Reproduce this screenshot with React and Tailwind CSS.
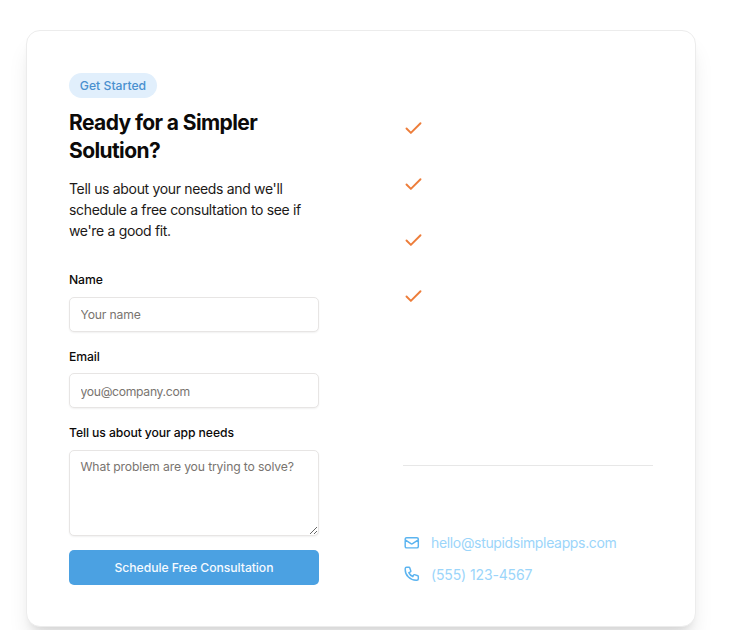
import { Check } from 'lucide-react';

const fieldClass =
  'block w-full rounded-[5px] border border-[#e7e5e4] bg-white px-[10.5px] text-[12.2px] text-[#1c1917] shadow-[0_1px_2px_rgba(0,0,0,0.06)] outline-none placeholder:text-[#79746f]';

function OutlineIcon({ d }) {
  return (
    <svg
      viewBox="0 0 24 24"
      className="size-[17.5px] shrink-0 text-[#5bb4f0]"
      fill="none"
      stroke="currentColor"
      strokeWidth="2"
      strokeLinecap="round"
      strokeLinejoin="round"
    >
      <path d={d} />
    </svg>
  );
}

const mailPath =
  'M3 8l7.89 5.26a2 2 0 002.22 0L21 8M5 19h14a2 2 0 002-2V7a2 2 0 00-2-2H5a2 2 0 00-2 2v10a2 2 0 002 2z';
const phonePath =
  'M3 5a2 2 0 012-2h3.28a1 1 0 01.948.684l1.498 4.493a1 1 0 01-.502 1.21l-2.257 1.13a11.042 11.042 0 005.516 5.516l1.13-2.257a1 1 0 011.21-.502l4.493 1.498a1 1 0 01.684.949V19a2 2 0 01-2 2h-1C9.716 21 3 14.284 3 6V5z';

function Field({ id, label, children }) {
  return (
    <div>
      <label htmlFor={id} className="block h-[25.7px] text-[12.2px] leading-[18px] font-medium tracking-[-0.1px] text-[#0c0a09]">
        {label}
      </label>
      {children}
    </div>
  );
}

export default function App() {
  return (
    <div
      className="h-[630px] overflow-hidden bg-white pt-[30px] pl-[26px] text-[#0c0a09] antialiased"
      style={{ fontFamily: 'Inter, "Liberation Sans", sans-serif' }}
    >
      <section className="grid h-[597px] w-[670px] grid-cols-2 gap-[84px] rounded-[14px] border border-[#ececec] bg-white px-[42px] pt-[42px] shadow-[0_17px_22px_-4px_rgba(0,0,0,0.1),0_7px_9px_-5px_rgba(0,0,0,0.1)]">
        <div>
          <div className="flex h-[25px] w-[88px] items-center justify-center rounded-full bg-[#e1effc] pt-px text-[12.2px] font-medium text-[#4a90cf]">
            Get Started
          </div>
          <h2 className="mt-[11px] text-[21px] leading-[28px] font-bold tracking-[-0.6px]">
            Ready for a Simpler Solution?
          </h2>
          <p className="mt-[13px] text-[14px] leading-[21px] tracking-[-0.33px] text-[#1c1917]">
            Tell us about your needs and we'll schedule a free consultation to see if we're a good fit.
          </p>
          <form className="mt-[30px]" onSubmit={(e) => e.preventDefault()}>
            <div className="flex flex-col gap-4">
              <Field id="name" label="Name">
                <input id="name" placeholder="Your name" className={`${fieldClass} h-[35px] tracking-[-0.18px]`} />
              </Field>
              <Field id="email" label="Email">
                <input id="email" placeholder="you@company.com" className={`${fieldClass} h-[35px] pt-px tracking-[-0.32px]`} />
              </Field>
              <Field id="needs" label="Tell us about your app needs">
                <textarea
                  id="needs"
                  placeholder="What problem are you trying to solve?"
                  className={`${fieldClass} h-[86px] resize-y py-[7px] leading-[18px] tracking-[-0.14px]`}
                />
              </Field>
            </div>
            <button className="mt-[14px] flex h-[35px] w-full items-center justify-center rounded-[5px] bg-[#4ba1e2] pt-px text-[12.2px] font-medium tracking-[-0.06px] text-[#f5faff]">
              Schedule Free Consultation
            </button>
          </form>
        </div>
        <div className="pt-[45px]">
          <ul className="flex flex-col gap-[35px] text-[#ed7d3a]">
            {[0, 1, 2, 3].map((n) => (
              <li key={n} className="h-[21px]">
                <Check size={21} strokeWidth={2.2} />
              </li>
            ))}
          </ul>
          <div className="mt-[158px] border-t border-[#e7e7e7] pt-[66px] text-[14px] leading-[21px] text-[#9bd5fa]">
            <div className="flex items-center gap-[10.5px]">
              <OutlineIcon d={mailPath} />
              <span className="tracking-[-0.34px]">hello@stupidsimpleapps.com</span>
            </div>
            <div className="mt-[10.5px] flex items-center gap-[10.5px]">
              <OutlineIcon d={phonePath} />
              <span className="tracking-[-0.13px]">(555) 123-4567</span>
            </div>
          </div>
        </div>
      </section>
    </div>
  );
}
